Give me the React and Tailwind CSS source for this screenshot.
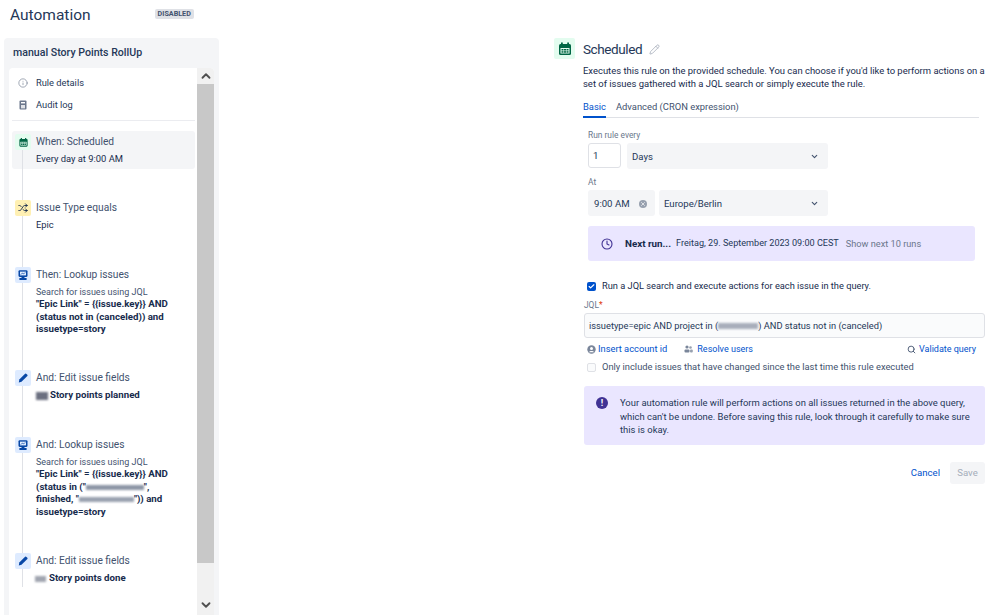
import React from "react";
import { ChevronUp, ChevronDown, Info, Shuffle, Pencil, Clock, Check, Search, X } from "lucide-react";

const Cal = ({ s = 12, c = "#006644" }) => (
  <svg width={s} height={s} viewBox="0 0 16 16">
    <rect x="4" y="1.5" width="1.8" height="3" fill={c} />
    <rect x="10.2" y="1.5" width="1.8" height="3" fill={c} />
    <rect x="2" y="3" width="12" height="11" rx="1.5" fill={c} />
    <rect x="3.5" y="7" width="9" height="5.5" fill="#e3fcef" />
    <rect x="4.5" y="8" width="2" height="1.5" fill={c} />
    <rect x="7" y="8" width="2" height="1.5" fill={c} />
    <rect x="9.5" y="8" width="2" height="1.5" fill={c} />
    <rect x="4.5" y="10.2" width="2" height="1.5" fill={c} />
    <rect x="7" y="10.2" width="2" height="1.5" fill={c} />
    <rect x="9.5" y="10.2" width="2" height="1.5" fill={c} />
  </svg>
);

const Lookup = () => (
  <svg width="12" height="12" viewBox="0 0 16 16">
    <rect x="2" y="1.5" width="12" height="9" rx="1.5" fill="#0747a6" />
    <rect x="4" y="3.5" width="8" height="5" fill="#deebff" />
    <path d="M5 7.5 7 5.5 9 6.5 11 4.5" stroke="#0747a6" strokeWidth="1" fill="none" />
    <rect x="6" y="10.5" width="4" height="1.5" fill="#0747a6" />
    <rect x="3" y="12" width="10" height="2.5" rx="1" fill="#0747a6" />
  </svg>
);

const Pen = () => (
  <svg width="12" height="12" viewBox="0 0 16 16">
    <path d="M10.8 2.2a1 1 0 0 1 1.4 0l1.6 1.6a1 1 0 0 1 0 1.4L6 13l-3.6.9.7-3.8z" fill="#0747a6" />
  </svg>
);

const Blur = ({ w, h = 7, c = "#7a8699", className = "" }) => (
  <span
    className={`inline-block blur-[1px] align-middle ${className}`}
    style={{ width: w, height: h, backgroundColor: c }}
  />
);

const Step = ({ tone, icon, title, active, children }) => (
  <div className={`flex gap-[4px] p-[3px] rounded-[3px] ${active ? "bg-[#f4f5f7]" : ""}`}>
    <div className={`relative z-10 flex h-[16px] w-[16px] shrink-0 items-center justify-center rounded-[2px] ${tone}`}>
      {icon}
    </div>
    <div className="min-w-0 pl-[1px] pt-[1px]">
      <div className="h-[14px] text-[10.2px] leading-[14px] text-[#42526e]">{title}</div>
      <div className="mt-[4px] text-[9.4px] leading-[12.5px] text-[#172b4d]">{children}</div>
    </div>
  </div>
);

const Sel = ({ label, w }) => (
  <div className={`flex h-[26px] items-center justify-between rounded-[3px] bg-[#f4f5f7] pl-[5px] pr-[9px] pt-[1px] text-[9.6px] text-[#253858] ${w}`}>
    <span>{label}</span>
    <ChevronDown size={9} strokeWidth={3} className="text-[#42526e]" />
  </div>
);

export default function App() {
  return (
    <div className="flex h-[615px] w-[999px] overflow-hidden bg-white font-['Roboto',sans-serif] text-[#172b4d]">
      <aside className="flex w-[219px] shrink-0 flex-col pl-[4px]">
        <div className="flex h-[38px] shrink-0 items-start pl-[6px] pt-[4px]">
          <span className="text-[15.5px] leading-[22px] text-[#253858]">Automation</span>
          <span className="ml-[64px] mt-[5px] rounded-[2px] bg-[#dfe1e6] px-[3px] text-[7.2px] font-bold leading-[10px] text-[#42526e]">DISABLED</span>
        </div>
        <div className="flex min-h-0 flex-1 flex-col rounded-t-[4px] bg-[#f4f5f7] px-[5px]">
          <div className="flex h-[30px] shrink-0 items-center pl-[4px] pb-[1px] text-[10.6px] font-medium text-[#253858]">manual Story Points RollUp</div>
          <div className="flex min-h-0 flex-1 overflow-hidden rounded-t-[4px] bg-white">
            <div className="min-w-0 flex-1 overflow-hidden pl-[3px]">
              <div className="flex flex-col gap-[8px] pl-[6px] pt-[8px] text-[9.3px] text-[#253858]">
                <div className="flex h-[14px] items-center gap-[8px]">
                  <Info size={10} strokeWidth={1.5} className="text-[#6b778c]" /> Rule details
                </div>
                <div className="flex h-[14px] items-center gap-[8px]">
                  <svg width="10" height="10" viewBox="0 0 10 10"><rect x="1.5" y="0.5" width="7" height="9" rx="1" fill="#6b778c" /><rect x="3" y="2" width="4" height="1.4" fill="#fff" /><rect x="3" y="5" width="4" height="3.4" fill="#dfe1e6" /></svg>
                  Audit log
                </div>
              </div>
              <div className="mr-[2px] mt-[8px] h-[1px] bg-[#ebecf0]" />
              <div className="relative mr-[2px] mt-[10px] flex flex-col gap-[28.8px]">
                <div className="absolute bottom-0 left-[10px] top-[16px] w-[1px] bg-[#dfe1e6]" />
                <Step active tone="bg-[#e3fcef]" icon={<Cal s={11} />} title="When: Scheduled">Every day at 9:00 AM</Step>
                <Step tone="bg-[#fff0b3]" icon={<Shuffle size={10} strokeWidth={2.2} className="text-[#172b4d]" />} title="Issue Type equals">Epic</Step>
                <Step tone="bg-[#deebff]" icon={<Lookup />} title="Then: Lookup issues">
                  <span className="text-[9px] text-[#42526e]">Search for issues using JQL</span><br />
                  <b className="text-[9.7px]">"Epic Link" = {"{{issue.key}}"} AND<br />(status not in (canceled)) and<br />issuetype=story</b>
                </Step>
                <Step tone="bg-[#deebff]" icon={<Pen />} title="And: Edit issue fields">
                  <Blur w={12} h={8} c="#6b6f80" className="mr-[2px]" /><b className="text-[9.7px]">Story points planned</b>
                </Step>
                <Step tone="bg-[#deebff]" icon={<Lookup />} title="And: Lookup issues">
                  <span className="text-[9px] text-[#42526e]">Search for issues using JQL</span><br />
                  <b className="text-[9.7px]">"Epic Link" = {"{{issue.key}}"} AND<br />(status in ("<Blur w={58} h={5} c="#8d96a6" />",<br />finished, "<Blur w={55} h={5} c="#9aa2b0" />")) and<br />issuetype=story</b>
                </Step>
                <Step tone="bg-[#deebff]" icon={<Pen />} title="And: Edit issue fields">
                  <Blur w={11} h={6} c="#a0a5b0" className="mr-[3px] -ml-[1px]" /><b className="text-[9.7px]">Story points done</b>
                </Step>
              </div>
            </div>
            <div className="flex w-[17px] shrink-0 flex-col bg-[#f1f1f1]">
              <div className="flex h-[16px] items-center justify-center"><ChevronUp size={14} strokeWidth={3.2} className="text-[#505050]" /></div>
              <div className="h-[479px] bg-[#c8c8c8]" />
              <div className="flex flex-1 items-start justify-center pt-[35px]"><ChevronDown size={14} strokeWidth={3.2} className="text-[#505050]" /></div>
            </div>
          </div>
        </div>
      </aside>

      <main className="ml-[336px] flex w-[431px] shrink-0 flex-col pt-[38px]">
        <div className="flex h-[21px] items-center">
          <div className="-ml-[1px] flex h-[21px] w-[21px] items-center justify-center rounded-[2px] bg-[#e3fcef]"><Cal s={16} /></div>
          <span className="ml-[8px] pt-[1px] text-[13.5px] leading-[21px] tracking-[-0.4px] text-[#253858]">Scheduled</span>
          <Pencil size={11} strokeWidth={1.5} className="ml-[7px] mt-[1px] text-[#97a0af]" />
        </div>
        <div className="ml-[28px] flex flex-col">
          <p className="mt-[5px] w-[404px] text-[9.45px] leading-[13.2px] text-[#172b4d]">Executes this rule on the provided schedule. You can choose if you'd like to perform actions on a set of issues gathered with a JQL search or simply execute the rule.</p>
          <div className="mt-[10px] flex h-[18px] w-[396px] items-start gap-[10px] border-b border-[#dfe1e6] text-[9.4px] leading-[13px]">
            <span className="h-[18px] border-b-2 border-[#0052cc] px-0 text-[#0052cc]">Basic</span>
            <span className="text-[#42526e]">Advanced (CRON expression)</span>
          </div>
          <div className="ml-[5px] flex flex-col">
            <label className="mt-[12px] text-[8.4px] leading-[11px] text-[#6b778c]">Run rule every</label>
            <div className="mt-[2px] flex gap-[6px]">
              <div className="flex h-[25px] w-[33px] items-center rounded-[3px] border border-[#dfe1e6] pl-[4px] text-[9.6px] text-[#253858]">1</div>
              <Sel label="Days" w="w-[201px]" />
            </div>
            <label className="mt-[8px] text-[8.4px] leading-[11px] text-[#6b778c]">At</label>
            <div className="mt-[2px] flex gap-[4px]">
              <div className="flex h-[26px] w-[67px] items-center justify-between rounded-[3px] bg-[#f4f5f7] pl-[6px] pr-[8px] pt-[1px] text-[9.6px] text-[#253858]">
                <span>9:00 AM</span>
                <span className="flex h-[8px] w-[8px] items-center justify-center rounded-full bg-[#97a0af]"><X size={6} strokeWidth={3} className="text-[#f4f5f7]" /></span>
              </div>
              <Sel label="Europe/Berlin" w="w-[169px]" />
            </div>
            <div className="mt-[10px] flex h-[35px] w-[387px] items-center rounded-[3px] bg-[#eae6ff] pl-[13px] text-[9.1px]">
              <Clock size={12} strokeWidth={2.2} className="text-[#403294]" />
              <b className="ml-[12px] text-[9.8px]">Next run...</b>
              <span className="ml-[5px] text-[#253858]">Freitag, 29. September 2023 09:00 CEST</span>
              <span className="ml-[7px] text-[9.2px] text-[#6b778c]">Show next 10 runs</span>
            </div>
          </div>
          <div className="ml-[4px] mt-[19px] flex h-[12px] items-center gap-[6px] text-[9.25px] text-[#172b4d]">
            <span className="flex h-[9px] w-[9px] items-center justify-center rounded-[2px] bg-[#0052cc]"><Check size={7} strokeWidth={4} className="text-white" /></span>
            Run a JQL search and execute actions for each issue in the query.
          </div>
          <label className="mt-[8px] ml-[1px] text-[8.4px] leading-[10px] text-[#6b778c]">JQL<span className="text-[#de350b]">*</span></label>
          <div className="ml-[1px] mt-[3px] flex h-[25px] w-[401px] items-center rounded-[3px] border border-[#dfe1e6] bg-[#fafbfc] pl-[4px] text-[9.3px] text-[#253858]">
            <span>issuetype=epic AND project in (</span><Blur w={40} h={6} c="#a8aebb" /><span>) AND status not in (canceled)</span>
          </div>
          <div className="ml-[4px] mt-[5px] flex h-[12px] w-[389px] items-center text-[9px] text-[#0052cc]">
            <svg className="mr-[2px]" width="9" height="9" viewBox="0 0 9 9"><circle cx="4.5" cy="4.5" r="4.2" fill="#7a869a" /><circle cx="4.5" cy="3.4" r="1.5" fill="#fff" /><path d="M2 7.2c.5-1.5 4.5-1.5 5 0z" fill="#fff" /></svg>
            <span className="text-[9.3px]">Insert account id</span>
            <svg className="ml-[17px] mr-[4px]" width="9" height="8" viewBox="0 0 9 8"><circle cx="3" cy="2" r="1.6" fill="#7a869a" /><circle cx="6.5" cy="2.5" r="1.3" fill="#97a0af" /><rect x="0.5" y="4.5" width="5" height="3" rx="1" fill="#7a869a" /><rect x="6" y="4.5" width="2.8" height="3" rx="1" fill="#97a0af" /></svg>
            <span>Resolve users</span>
            <Search size={9} strokeWidth={2.4} className="ml-auto mr-[3px] text-[#42526e]" />
            <span>Validate query</span>
          </div>
          <div className="ml-[4px] mt-[6px] flex h-[12px] items-center gap-[6px] text-[9.33px] text-[#42526e]">
            <span className="h-[9px] w-[9px] rounded-[2px] border border-[#dfe1e6] bg-[#fafbfc]" />
            Only include issues that have changed since the last time this rule executed
          </div>
          <div className="ml-[1px] mt-[13px] flex h-[59px] w-[401px] rounded-[3px] bg-[#eae6ff] pl-[12px] pt-[10px]">
            <span className="mt-[1px] flex h-[12px] w-[12px] shrink-0 items-center justify-center rounded-full bg-[#403294] text-[9px] font-bold leading-none text-white">!</span>
            <p className="ml-[12px] w-[360px] text-[9.43px] leading-[13.5px] text-[#253858]">Your automation rule will perform actions on all issues returned in the above query, which can't be undone. Before saving this rule, look through it carefully to make sure this is okay.</p>
          </div>
          <div className="mt-[17px] flex w-[402px] items-center justify-end gap-[10px] text-[9.6px]">
            <span className="text-[#0052cc]">Cancel</span>
            <span className="flex h-[22px] w-[35px] items-center justify-center rounded-[3px] bg-[#f4f5f7] text-[#a5adba]">Save</span>
          </div>
        </div>
      </main>
    </div>
  );
}
